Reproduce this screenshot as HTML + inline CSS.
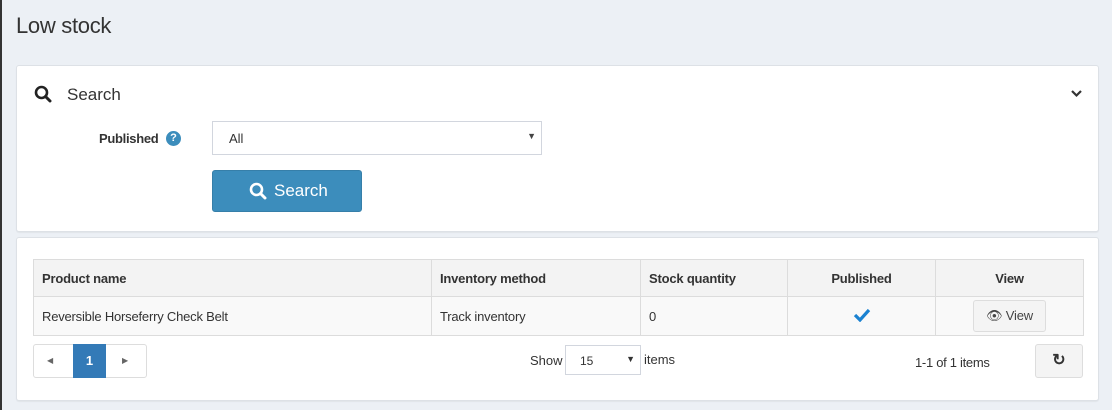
<!DOCTYPE html>
<html><head><style>
*{box-sizing:border-box;margin:0;padding:0}
body{width:1112px;height:410px;background:#ecf0f5;font-family:"Liberation Sans",sans-serif;color:#333;position:relative;overflow:hidden}
.abs{position:absolute}
h1{position:absolute;left:16px;top:13px;font-size:22px;font-weight:normal;color:#333;letter-spacing:-0.3px}
.panel{position:absolute;left:16px;width:1083px;background:#fff;border:1px solid #dde1e6;border-radius:3px;box-shadow:0 1px 1px rgba(0,0,0,.05)}
table{border-collapse:collapse;position:absolute;left:16px;top:21px;width:1051px;font-size:13px;letter-spacing:-0.2px}
td,th{border:1px solid #dcdcdc;padding:0 8px;text-align:left}
th{background:#f3f3f3;height:37px;font-weight:bold}
td{background:#f9f9f9;height:39px}
.c{text-align:center}
</style></head><body>
<div class="abs" style="left:0;top:0;width:2px;height:410px;background:#333"></div>
<h1>Low stock</h1>
<div class="panel" style="top:65px;height:167px">
 <svg class="abs" style="left:17px;top:19px" width="18" height="18" viewBox="0 0 18 18"><circle cx="7.5" cy="7.5" r="5.5" fill="none" stroke="#222" stroke-width="2.6"/><path d="M11.5 11.5L16 16" stroke="#222" stroke-width="3" stroke-linecap="round"/></svg>
 <div class="abs" style="left:50px;top:19px;font-size:17px;color:#333">Search</div>
 <svg class="abs" style="left:1053px;top:23px" width="13" height="10" viewBox="0 0 13 10"><path d="M2 2l4.5 4.5L11 2" fill="none" stroke="#333" stroke-width="2.2"/></svg>
 <div class="abs" style="left:82px;top:65px;font-size:13px;font-weight:bold;letter-spacing:-0.3px">Published</div>
 <div class="abs" style="left:149px;top:65px;width:15px;height:15px;border-radius:50%;background:#3c8dbc;color:#fff;font-size:11px;font-weight:bold;text-align:center;line-height:15px">?</div>
 <div class="abs" style="left:195px;top:55px;width:330px;height:34px;border:1px solid #d2d6de;font-size:13px;padding:9px 16px">All<span class="abs" style="right:5px;top:9px;font-size:9px;color:#444">▼</span></div>
 <div class="abs" style="left:195px;top:104px;width:150px;height:42px;background:#3c8dbc;border:1px solid #367fa9;border-radius:3px;color:#fff;font-size:17px;line-height:40px;padding-left:61px">Search</div>
 <svg class="abs" style="left:232px;top:116px" width="18" height="18" viewBox="0 0 18 18"><circle cx="7.5" cy="7.5" r="5.5" fill="none" stroke="#fff" stroke-width="2.6"/><path d="M11.5 11.5L16 16" stroke="#fff" stroke-width="3" stroke-linecap="round"/></svg>
</div>
<div class="panel" style="top:237px;height:164px">
 <table>
  <tr><th style="width:398px">Product name</th><th style="width:209px">Inventory method</th><th style="width:147px">Stock quantity</th><th class="c" style="width:148px">Published</th><th class="c">View</th></tr>
  <tr><td>Reversible Horseferry Check Belt</td><td>Track inventory</td><td>0</td><td class="c"><svg width="18" height="14" viewBox="0 0 18 14"><path d="M2 7l5 5L16 2" fill="none" stroke="#1b82d1" stroke-width="3.2"/></svg></td><td class="c"><span style="display:inline-block;width:73px;height:32px;border:1px solid #ddd;border-radius:3px;background:#f4f4f4;line-height:30px;color:#444">&#128065; View</span></td></tr>
 </table>
 <div class="abs" style="left:16px;top:106px;width:114px;height:34px;border:1px solid #ddd;border-radius:3px"></div>
 <div class="abs" style="left:30px;top:118px;font-size:8px;color:#666">◀</div>
 <div class="abs" style="left:56px;top:106px;width:33px;height:34px;background:#337ab7;color:#fff;font-size:13px;font-weight:bold;text-align:center;line-height:34px">1</div>
 <div class="abs" style="left:105px;top:118px;font-size:8px;color:#666">▶</div>
 <div class="abs" style="left:513px;top:115px;font-size:13px">Show</div>
 <div class="abs" style="left:548px;top:107px;width:76px;height:30px;border:1px solid #d2d6de;font-size:12px;padding:8px 14px">15<span class="abs" style="right:5px;top:8px;font-size:9px">▼</span></div>
 <div class="abs" style="left:627px;top:114px;font-size:13px">items</div>
 <div class="abs" style="left:898px;top:117px;font-size:13px;letter-spacing:-0.3px">1-1 of 1 items</div>
 <div class="abs" style="left:1018px;top:106px;width:48px;height:34px;border:1px solid #ddd;border-radius:3px;background:#f4f4f4;text-align:center;line-height:32px;font-size:16px;font-weight:bold">&#x21bb;</div>
</div>
</body></html>
